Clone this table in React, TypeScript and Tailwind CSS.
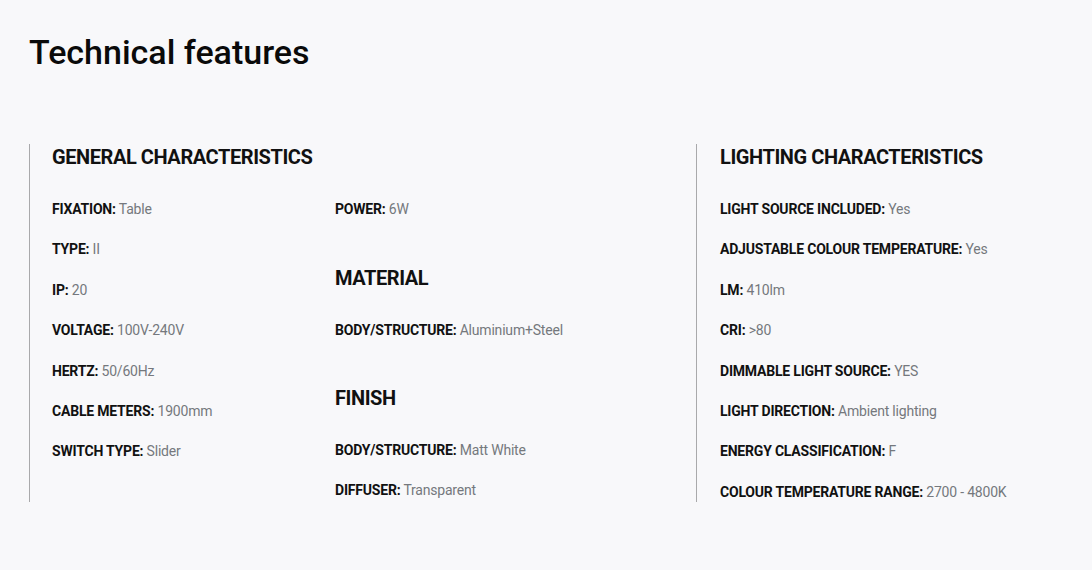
import React from "react";

type Spec = { label: string; value: string };

const general: Spec[] = [
  { label: "FIXATION", value: "Table" },
  { label: "TYPE", value: "II" },
  { label: "IP", value: "20" },
  { label: "VOLTAGE", value: "100V-240V" },
  { label: "HERTZ", value: "50/60Hz" },
  { label: "CABLE METERS", value: "1900mm" },
  { label: "SWITCH TYPE", value: "Slider" },
];

const lighting: Spec[] = [
  { label: "LIGHT SOURCE INCLUDED", value: "Yes" },
  { label: "ADJUSTABLE COLOUR TEMPERATURE", value: "Yes" },
  { label: "LM", value: "410lm" },
  { label: "CRI", value: ">80" },
  { label: "DIMMABLE LIGHT SOURCE", value: "YES" },
  { label: "LIGHT DIRECTION", value: "Ambient lighting" },
  { label: "ENERGY CLASSIFICATION", value: "F" },
  { label: "COLOUR TEMPERATURE RANGE", value: "2700 - 4800K" },
];

function Row({ label, value }: Spec) {
  return (
    <p className="text-[14px] leading-[20px] tracking-[-0.2px] text-[#111]">
      <span className="font-bold">{label}:</span>{" "}
      <span className="text-[#75787d]">{value}</span>
    </p>
  );
}

function Heading({ children }: { children: React.ReactNode }) {
  return (
    <h3 className="text-[20px] leading-[26px] font-bold tracking-[-0.43px] text-[#111] mb-[29px]">
      {children}
    </h3>
  );
}

function RowList({ items }: { items: Spec[] }) {
  return (
    <div className="flex flex-col gap-[20.4px]">
      {items.map((s) => (
        <Row key={s.label} {...s} />
      ))}
    </div>
  );
}

export default function App() {
  return (
    <div
      className="min-h-screen bg-[#f8f8fa] px-[29px] pt-[32px]"
      style={{ fontFamily: "Roboto, 'Liberation Sans', sans-serif" }}
    >
      <h2 className="text-[34px] leading-[40px] font-medium text-[#0a0a0a]">
        Technical features
      </h2>

      <div className="flex mt-[72px]">
        {/* General characteristics */}
        <div className="w-[667px] border-l border-[#a9a9ab] pl-[22px]">
          <Heading>GENERAL CHARACTERISTICS</Heading>
          <div className="flex">
            <div className="w-[283px]">
              <RowList items={general} />
            </div>
            <div className="flex flex-col">
              <RowList items={[{ label: "POWER", value: "6W" }]} />
              <div className="mt-[46px]">
                <Heading>MATERIAL</Heading>
                <RowList items={[{ label: "BODY/STRUCTURE", value: "Aluminium+Steel" }]} />
              </div>
              <div className="mt-[45px]">
                <Heading>FINISH</Heading>
                <RowList
                  items={[
                    { label: "BODY/STRUCTURE", value: "Matt White" },
                    { label: "DIFFUSER", value: "Transparent" },
                  ]}
                />
              </div>
            </div>
          </div>
        </div>

        {/* Lighting characteristics */}
        <div className="flex-1 border-l border-[#a9a9ab] pl-[23px]">
          <Heading>LIGHTING CHARACTERISTICS</Heading>
          <RowList items={lighting} />
        </div>
      </div>
    </div>
  );
}
